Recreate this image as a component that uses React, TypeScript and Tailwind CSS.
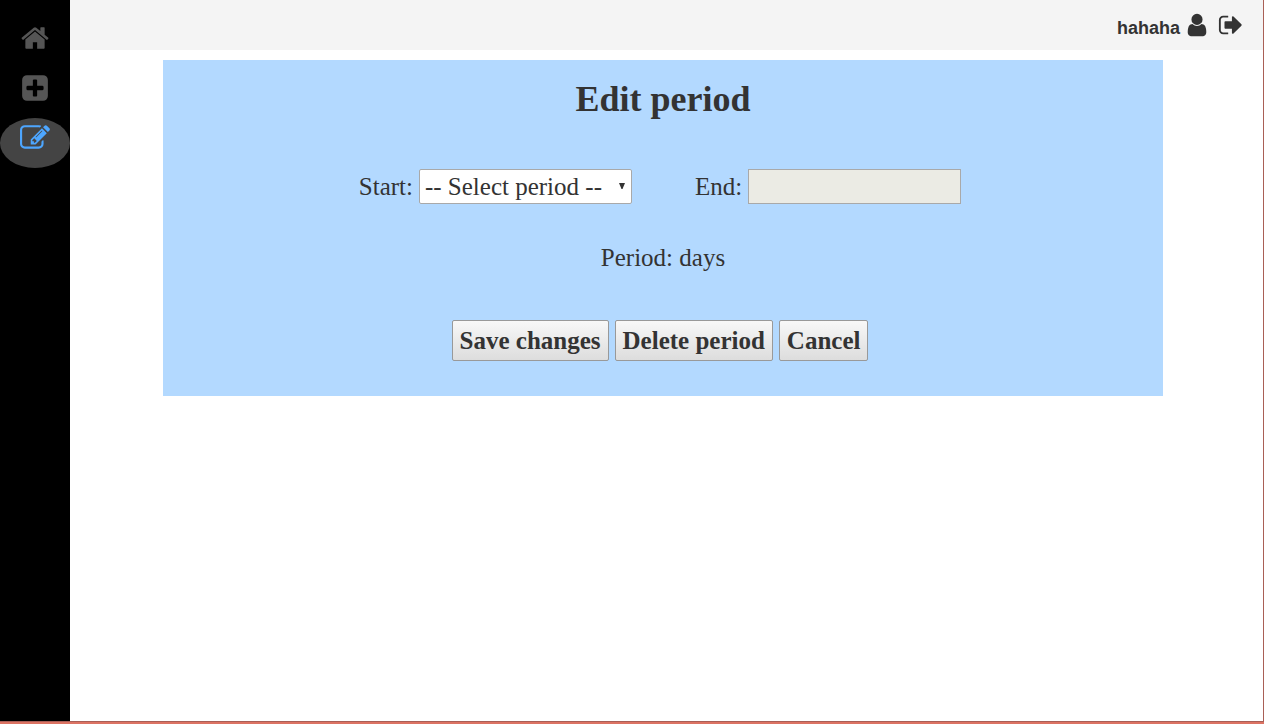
import { useState } from "react";

type IconProps = { path: string; className: string };

function Icon({ path, className }: IconProps) {
  return (
    <svg viewBox="0 0 1792 1792" fill="currentColor" aria-hidden="true" className={className}>
      <path d={path} />
    </svg>
  );
}

const HOME =
  "M1472 992v480q0 26-19 45t-45 19h-384v-384h-256v384h-384q-26 0-45-19t-19-45v-480q0-1 .5-3t.5-3l575-474 575 474q1 2 1 6zm223-69l-62 74q-8 9-21 11h-3q-13 0-21-7l-692-577-692 577q-12 8-24 7-13-2-21-11l-62-74q-8-10-7-23.5t11-21.5l719-599q32-26 76-26t76 26l244 204v-195q0-14 9-23t23-9h192q14 0 23 9t9 23v408l219 182q10 8 11 21.5t-7 23.5z";
const PLUS =
  "M1408 960v-128q0-26-19-45t-45-19h-320v-320q0-26-19-45t-45-19h-128q-26 0-45 19t-19 45v320h-320q-26 0-45 19t-19 45v128q0 26 19 45t45 19h320v320q0 26 19 45t45 19h128q26 0 45-19t19-45v-320h320q26 0 45-19t19-45zm256-544v960q0 119-84.5 203.5t-203.5 84.5h-960q-119 0-203.5-84.5t-84.5-203.5v-960q0-119 84.5-203.5t203.5-84.5h960q119 0 203.5 84.5t84.5 203.5z";
const EDIT =
  "M888 1184l116-116-152-152-116 116v56h96v96h56zm440-720q-16-16-33 1l-350 350q-17 17-1 33t33-1l350-350q17-17 1-33zm80 594v190q0 119-84.5 203.5t-203.5 84.5h-832q-119 0-203.5-84.5t-84.5-203.5v-832q0-119 84.5-203.5t203.5-84.5h832q63 0 117 25 15 7 18 23 3 17-9 29l-49 49q-14 14-32 8-23-6-45-6h-832q-66 0-113 47t-47 113v832q0 66 47 113t113 47h832q66 0 113-47t47-113v-126q0-13 9-22l64-64q15-15 35-7t20 29zm-96-738l288 288-672 672h-288v-288zm444 132l-92 92-288-288 92-92q28-28 68-28t68 28l152 152q28 28 28 68t-28 68z";
const USER =
  "M1536 1399q0 109-62.5 187t-150.5 78h-854q-88 0-150.5-78t-62.5-187q0-85 8.5-160.5t31.5-152 58.5-131 94-89 134.5-34.5q131 128 313 128t313-128q76 0 134.5 34.5t94 89 58.5 131 31.5 152 8.5 160.5zm-256-887q0 159-112.5 271.5t-271.5 112.5-271.5-112.5-112.5-271.5 112.5-271.5 271.5-112.5 271.5 112.5 112.5 271.5z";
const SIGN_OUT =
  "M704 1440q0 4 1 20t.5 26.5-3 23.5-10 19.5-20.5 6.5h-320q-119 0-203.5-84.5t-84.5-203.5v-704q0-119 84.5-203.5t203.5-84.5h320q13 0 22.5 9.5t9.5 22.5q0 4 1 20t.5 26.5-3 23.5-10 19.5-20.5 6.5h-320q-66 0-113 47t-47 113v704q0 66 47 113t113 47h312l11.5 1 11.5 3 8 5.5 7 9 2 13.5zm928-544q0 26-19 45l-544 544q-19 19-45 19t-45-19-19-45v-288h-448q-26 0-45-19t-19-45v-384q0-26 19-45t45-19h448v-288q0-26 19-45t45-19 45 19l544 544q19 19 19 45z";

const NAV = [
  { label: "Home", path: HOME, active: false },
  { label: "Add period", path: PLUS, active: false },
  { label: "Edit period", path: EDIT, active: true },
];

const ACTIONS = ["Save changes", "Delete period", "Cancel"];

export default function App() {
  const [start, setStart] = useState("");

  return (
    <div className="flex min-h-screen flex-col border-b-2 border-[#dc7363] bg-white text-[#333333]">
      <div className="flex grow border-r border-b border-[#a95f56]">
        <nav className="flex w-[70px] shrink-0 flex-col bg-black pt-[18px]">
          {NAV.map((item) => (
            <a
              key={item.label}
              href="#"
              aria-label={item.label}
              className={
                item.active
                  ? "flex h-[50px] justify-center rounded-[50%] bg-[#444444] pt-[5px] text-[#4da6ff]"
                  : "flex h-[50px] justify-center pt-[5px] text-[#555555]"
              }
            >
              <Icon path={item.path} className="size-[30px]" />
            </a>
          ))}
        </nav>

        <div className="flex min-w-0 grow flex-col">
          <header className="flex h-[50px] items-center justify-end bg-[#f4f4f4] pr-[19px]">
            <span className="pt-[5px] font-['Liberation_Sans',Arial,sans-serif] text-lg font-bold">hahaha</span>
            <a href="#" aria-label="Profile" className="ml-1">
              <Icon path={USER} className="size-[26px]" />
            </a>
            <a href="#" aria-label="Sign out" className="ml-2">
              <Icon path={SIGN_OUT} className="size-[26px]" />
            </a>
          </header>

          <main className="flex justify-center pt-[10px] pr-[7px] font-['Liberation_Serif','Times_New_Roman',serif] text-[25px] leading-7">
            <form
              onSubmit={(e) => e.preventDefault()}
              className="flex w-full max-w-[1000px] flex-col items-center bg-[#b3d9ff] pt-[19px] pb-[35px]"
            >
              <h1 className="text-[36px] leading-10 font-bold">Edit period</h1>

              <div className="mt-[50px] flex flex-wrap items-center justify-center gap-x-[63px] gap-y-4 pr-[6px]">
                <div className="flex items-center gap-[6px]">
                  <label htmlFor="start">Start:</label>
                  <div className="relative">
                    <select
                      id="start"
                      value={start}
                      onChange={(e) => setStart(e.target.value)}
                      className="block h-[35px] w-[213px] appearance-none rounded-[2px] border border-[#a9a9a9] bg-white pl-[5px]"
                    >
                      <option value="">-- Select period --</option>
                    </select>
                    <svg
                      viewBox="0 0 6 6"
                      fill="currentColor"
                      aria-hidden="true"
                      className="pointer-events-none absolute top-[14px] right-[7px] size-[6px]"
                    >
                      <path d="M0 0h6L3.5 6h-1z" />
                    </svg>
                  </div>
                </div>
                <div className="flex items-center gap-[6px]">
                  <label htmlFor="end">End:</label>
                  <input
                    id="end"
                    type="text"
                    disabled
                    className="h-[35px] w-[213px] border border-[#a9a9a9] bg-[#ebebe4] px-1"
                  />
                </div>
              </div>

              <p className="mt-[40px]">Period: days</p>

              <div className="mt-[48px] flex flex-wrap justify-center gap-[6px] pr-[6px]">
                {ACTIONS.map((label) => (
                  <button
                    key={label}
                    type="button"
                    className="h-[41px] rounded-[2px] border border-[#999999] bg-linear-to-b from-[#f8f8f8] to-[#dddddd] px-[7px] font-bold"
                  >
                    {label}
                  </button>
                ))}
              </div>
            </form>
          </main>
        </div>
      </div>
    </div>
  );
}
